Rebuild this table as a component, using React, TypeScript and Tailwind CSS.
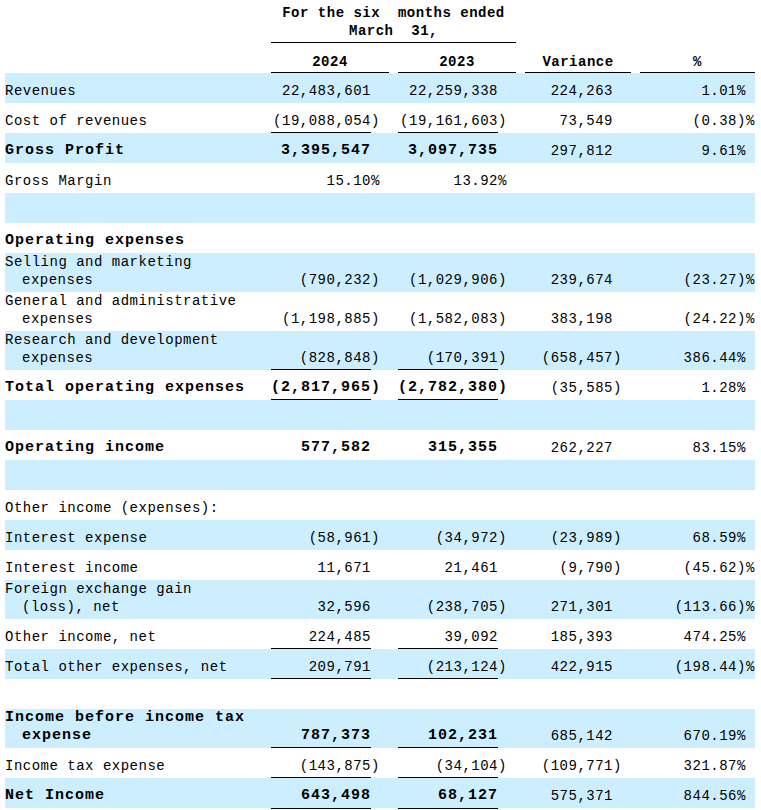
import React from "react";

type Pair = [string, string?];
type Row = {
  label?: string | [string, string];
  bg: boolean;
  bold?: boolean;
  boldLabel?: boolean;
  v24?: Pair;
  v23?: Pair;
  vr?: Pair;
  pct?: Pair;
  ul?: boolean;
};

const rows: Row[] = [
  { label: "Revenues", bg: true, v24: ["22,483,601"], v23: ["22,259,338"], vr: ["224,263"], pct: ["1.01", "%"] },
  { label: "Cost of revenues", bg: false, v24: ["(19,088,054", ")"], v23: ["(19,161,603", ")"], vr: ["73,549"], pct: ["(0.38", ")%"], ul: true },
  { label: "Gross Profit", bg: true, bold: true, v24: ["3,395,547"], v23: ["3,097,735"], vr: ["297,812"], pct: ["9.61", "%"] },
  { label: "Gross Margin", bg: false, v24: ["15.10", "%"], v23: ["13.92", "%"] },
  { bg: true },
  { label: "Operating expenses", bg: false, boldLabel: true },
  { label: ["Selling and marketing", "expenses"], bg: true, v24: ["(790,232", ")"], v23: ["(1,029,906", ")"], vr: ["239,674"], pct: ["(23.27", ")%"] },
  { label: ["General and administrative", "expenses"], bg: false, v24: ["(1,198,885", ")"], v23: ["(1,582,083", ")"], vr: ["383,198"], pct: ["(24.22", ")%"] },
  { label: ["Research and development", "expenses"], bg: true, v24: ["(828,848", ")"], v23: ["(170,391", ")"], vr: ["(658,457", ")"], pct: ["386.44", "%"], ul: true },
  { label: "Total operating expenses", bg: false, bold: true, v24: ["(2,817,965", ")"], v23: ["(2,782,380", ")"], vr: ["(35,585", ")"], pct: ["1.28", "%"], ul: true },
  { bg: true },
  { label: "Operating income", bg: false, bold: true, v24: ["577,582"], v23: ["315,355"], vr: ["262,227"], pct: ["83.15", "%"] },
  { bg: true },
  { label: "Other income (expenses):", bg: false },
  { label: "Interest expense", bg: true, v24: ["(58,961", ")"], v23: ["(34,972", ")"], vr: ["(23,989", ")"], pct: ["68.59", "%"] },
  { label: "Interest income", bg: false, v24: ["11,671"], v23: ["21,461"], vr: ["(9,790", ")"], pct: ["(45.62", ")%"] },
  { label: ["Foreign exchange gain", "(loss), net"], bg: true, v24: ["32,596"], v23: ["(238,705", ")"], vr: ["271,301"], pct: ["(113.66", ")%"] },
  { label: "Other income, net", bg: false, v24: ["224,485"], v23: ["39,092"], vr: ["185,393"], pct: ["474.25", "%"], ul: true },
  { label: "Total other expenses, net", bg: true, v24: ["209,791"], v23: ["(213,124", ")"], vr: ["422,915"], pct: ["(198.44", ")%"], ul: true },
  { bg: false },
  { label: ["Income before income tax", "expense"], bg: true, bold: true, v24: ["787,373"], v23: ["102,231"], vr: ["685,142"], pct: ["670.19", "%"], ul: true },
  { label: "Income tax expense", bg: false, v24: ["(143,875", ")"], v23: ["(34,104", ")"], vr: ["(109,771", ")"], pct: ["321.87", "%"], ul: true },
  { label: "Net Income", bg: true, bold: true, v24: ["643,498"], v23: ["68,127"], vr: ["575,371"], pct: ["844.56", "%"] },
];

const GRID =
  "grid grid-cols-[266px_100px_18px_9px_100px_18px_9px_88px_18px_9px_97px_18px]";
const REG = "text-[14px] tracking-[0.5px] leading-[18px]";
const BOLD = "text-[15px] font-bold tracking-[1px] leading-[18px]";

function ValueCells({ p, bold, ul }: { p?: Pair; bold?: boolean; ul?: boolean }) {
  const f = bold ? BOLD : REG;
  return (
    <>
      <div
        className={`flex items-end justify-end whitespace-nowrap pb-[2px] border-b ${
          ul ? "border-black" : "border-transparent"
        } ${f}`}
      >
        {p ? p[0] : ""}
      </div>
      <div className={`flex items-end whitespace-nowrap pb-[2px] border-b border-transparent ${f}`}>
        {p && p[1] ? p[1] : ""}
      </div>
    </>
  );
}

function Gap() {
  return <div />;
}

function BodyRow({ r }: { r: Row }) {
  const dbl = Array.isArray(r.label);
  const h = dbl ? "h-[39px]" : "h-[30px]";
  const bg = r.bg ? "bg-[#cceeff]" : "bg-white";
  const lf = r.bold || r.boldLabel ? BOLD : REG;
  return (
    <div className={`${GRID} ${h} ${bg}`}>
      <div className={`flex flex-col justify-end pb-[3px] whitespace-pre ${lf}`}>
        {Array.isArray(r.label) ? (
          <>
            <div>{r.label[0]}</div>
            <div className="pl-[17px]">{r.label[1]}</div>
          </>
        ) : (
          <div>{r.label ?? ""}</div>
        )}
      </div>
      <ValueCells p={r.v24} bold={r.bold} ul={r.ul} />
      <Gap />
      <ValueCells p={r.v23} bold={r.bold} ul={r.ul} />
      <Gap />
      <ValueCells p={r.vr} />
      <Gap />
      <ValueCells p={r.pct} />
    </div>
  );
}

export default function App() {
  const HB = "text-[14px] font-bold tracking-[0.5px] leading-[18px] whitespace-pre";
  return (
    <div className="w-[761px] bg-white text-black font-['Liberation_Mono',monospace] px-[5px]">
      <div className="w-[750px]">
        {/* header row 1 */}
        <div className={`${GRID} h-[43px]`}>
          <div />
          <div className={`col-span-5 flex flex-col items-center justify-end pb-[2px] border-b border-black ${HB}`}>
            <div>For the six  months ended</div>
            <div>March  31,</div>
          </div>
        </div>
        {/* header row 2 */}
        <div className={`${GRID} h-[30px]`}>
          <div />
          <div className={`col-span-2 flex items-end justify-center pb-[1px] border-b border-black ${HB}`}>2024</div>
          <div />
          <div className={`col-span-2 flex items-end justify-center pb-[1px] border-b border-black ${HB}`}>2023</div>
          <div />
          <div className={`col-span-2 flex items-end justify-center pb-[1px] border-b border-black ${HB}`}>Variance</div>
          <div />
          <div className={`col-span-2 flex items-end justify-center pb-[1px] border-b border-black ${HB}`}>%</div>
        </div>
        {rows.map((r, i) => (
          <BodyRow key={i} r={r} />
        ))}
        {/* double underline */}
        <div className={`${GRID} h-[5px]`}>
          <div />
          <div className="border-t border-b border-black" />
          <div />
          <div />
          <div className="border-t border-b border-black" />
        </div>
      </div>
    </div>
  );
}
